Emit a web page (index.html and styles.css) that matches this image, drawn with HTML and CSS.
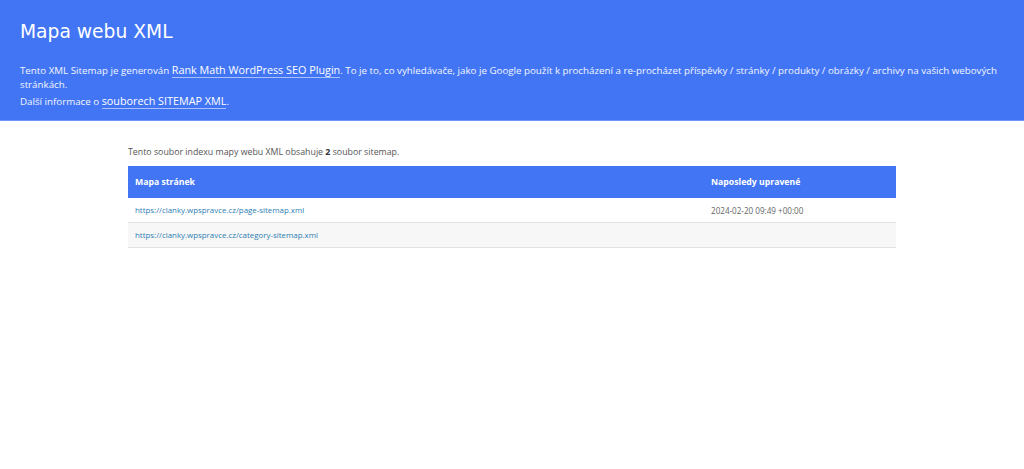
FILE: index.html
```html
<!DOCTYPE html>
<html lang="cs">
<head>
<meta charset="utf-8">
<title>Mapa webu XML</title>
<link rel="stylesheet" href="styles.css">
</head>
<body>
<header class="sitemap-header">
  <h1 class="title">Mapa webu XML</h1>
  <p class="lead">Tento XML Sitemap je generován <a class="hlink" href="#">Rank Math WordPress SEO Plugin</a>. To je to, co vyhledávače, jako je Google použít k procházení a re-procházet příspěvky / stránky / produkty / obrázky / archivy na vašich webových stránkách.</p>
  <p class="lead">Další informace o <a class="hlink" href="#">souborech SITEMAP XML</a>.</p>
</header>
<main class="content">
  <p class="intro">Tento soubor indexu mapy webu XML obsahuje <strong>2</strong> soubor sitemap.</p>
  <table class="sitemap">
    <thead>
      <tr><th class="col-loc">Mapa stránek</th><th class="col-mod">Naposledy upravené</th></tr>
    </thead>
    <tbody>
      <tr><td><a class="loc" href="#">https://clanky.wpspravce.cz/page-sitemap.xml</a></td><td class="mod">2024-02-20 09:49 +00:00</td></tr>
      <tr class="alt"><td><a class="loc" href="#">https://clanky.wpspravce.cz/category-sitemap.xml</a></td><td class="mod"></td></tr>
    </tbody>
  </table>
</main>
</body>
</html>
```
FILE: styles.css
```css
html, body {
  margin: 0;
  padding: 0;
  background: #fff;
}
body {
  font-family: "Open Sans", "Noto Sans", sans-serif;
  color: #444;
}
.sitemap-header {
  background: #4275f4;
  border-bottom: 1px solid #6e95f7;
  padding: 20px 20px 12px 20px;
  height: 88px;
  color: #fff;
}
.title {
  font-family: "DejaVu Sans", sans-serif;
  font-weight: normal;
  font-size: 18.7px;
  line-height: 24px;
  margin: 0 0 20px 0;
  letter-spacing: 0;
}
.lead {
  font-size: 9.75px;
  line-height: 14px;
  margin: 0 0 3px 0;
  color: #f2f5ff;
}
.hlink {
  color: #fff;
  text-decoration: none;
  font-size: 10.8px;
  line-height: 12px;
  border-bottom: 1px solid #a9c0fa;
}
.content {
  width: 768px;
  margin: 0 auto;
  padding-top: 24px;
}
.intro {
  font-size: 8.8px;
  line-height: 14px;
  margin: 0 0 7px 0;
  color: #555;
}
.intro strong {
  color: #333;
}
.sitemap {
  width: 100%;
  border-collapse: collapse;
  font-size: 7.6px;
}
.sitemap th {
  background: #4275f4;
  color: #fff;
  text-align: left;
  font-weight: 700;
  font-size: 8.7px;
  height: 32px;
  padding: 0 7px;
  box-sizing: border-box;
}
.col-mod {
  width: 192px;
}
.sitemap td {
  height: 24px;
  padding: 0 7px;
  border-bottom: 1px solid #e2e2e2;
  vertical-align: middle;
}
.sitemap tr.alt td {
  background: #f7f7f7;
}
.loc {
  color: #2d7eb3;
  text-decoration: none;
  font-size: 7.9px;
  letter-spacing: 0;
}
.mod {
  color: #666;
  font-size: 8.1px;
}
```
